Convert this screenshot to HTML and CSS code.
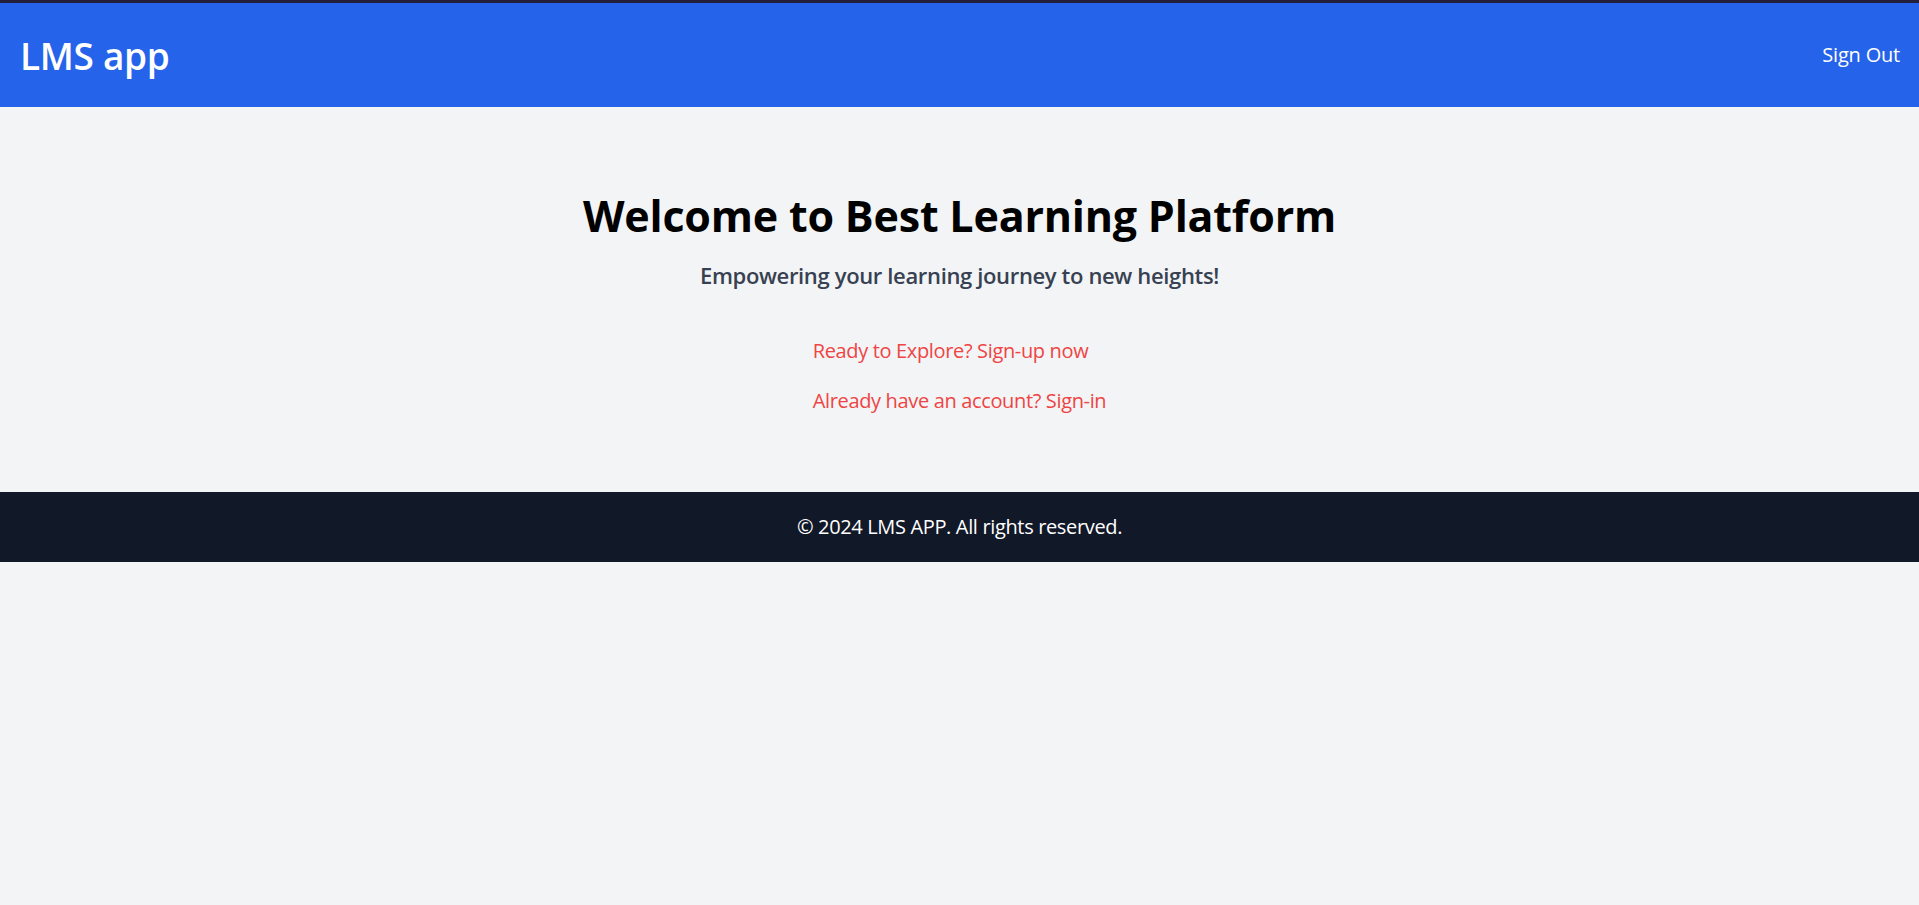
FILE: index.html
```html
<!DOCTYPE html>
<html lang="en">
<head>
<meta charset="utf-8">
<title>LMS app</title>
<link rel="stylesheet" href="styles.css">
</head>
<body>
<div class="topstrip"></div>
<header class="navbar">
  <div class="brand">LMS app</div>
  <a class="signout" href="#">Sign Out</a>
</header>
<main class="hero">
  <h1 class="hero-title">Welcome to Best Learning Platform</h1>
  <p class="hero-sub">Empowering your learning journey to new heights!</p>
  <div class="hero-links">
    <a class="hero-link" href="#">Ready to Explore? Sign-up now</a>
    <a class="hero-link" href="#">Already have an account? Sign-in</a>
  </div>
</main>
<footer class="footer">
  <p class="footer-text">© 2024 LMS APP. All rights reserved.</p>
</footer>
</body>
</html>
```
FILE: styles.css
```css
* { box-sizing: border-box; }
html, body {
  margin: 0;
  padding: 0;
  background: #f3f4f6;
  font-family: "Open Sans", "Noto Sans", sans-serif;
}
.topstrip {
  height: 3px;
  background: #231f3a;
}
.navbar {
  height: 104px;
  background: #2563eb;
  display: flex;
  align-items: center;
  justify-content: space-between;
  padding: 0 20px 0 20px;
  color: #fff;
}
.brand {
  font-size: 37px;
  line-height: 45px;
  font-weight: 600;
  letter-spacing: -0.3px;
}
.signout {
  color: #fff;
  text-decoration: none;
  font-size: 20px;
  line-height: 30px;
  letter-spacing: -0.2px;
  margin-right: -1px;
}
.hero {
  padding: 84px 0 76px;
  text-align: center;
}
.hero-title {
  margin: 0;
  font-size: 43px;
  line-height: 50px;
  font-weight: 700;
  color: #000;
  letter-spacing: -0.2px;
}
.hero-sub {
  margin: 17px 0 0;
  font-size: 22px;
  line-height: 35px;
  font-weight: 600;
  color: #374151;
  letter-spacing: -0.35px;
}
.hero-links {
  margin: 43px auto 0;
  display: inline-flex;
  flex-direction: column;
  align-items: flex-start;
  gap: 20px;
}
.hero-link {
  color: #ef4444;
  text-decoration: none;
  font-size: 20px;
  line-height: 30px;
  letter-spacing: -0.35px;
}
.footer {
  background: #111827;
  padding: 20px 0;
  text-align: center;
}
.footer-text {
  margin: 0;
  color: #fff;
  font-size: 20px;
  line-height: 30px;
  letter-spacing: -0.35px;
}
```
